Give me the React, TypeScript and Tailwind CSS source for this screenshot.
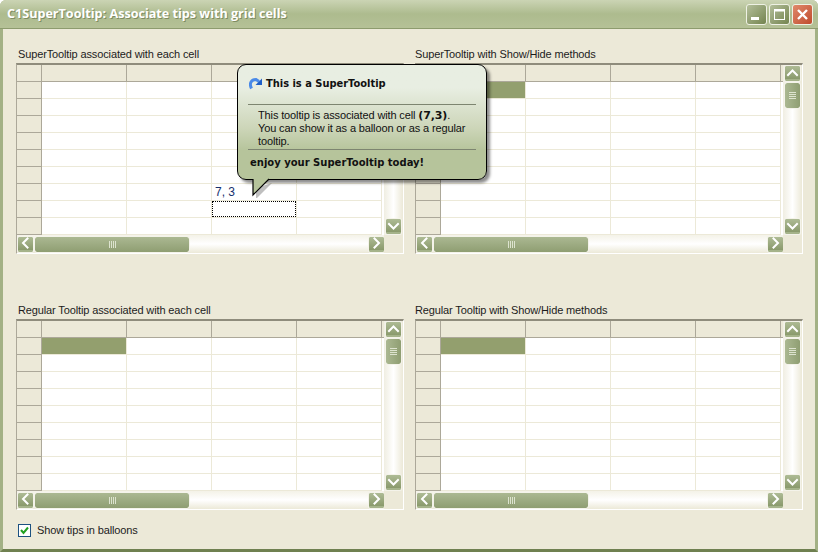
import React from "react";

const FONT = "font-['Liberation_Sans',sans-serif]";

function Chevron({ dir }: { dir: "up" | "down" | "left" | "right" }) {
  const d = {
    up: "M3 9 L7.5 4.5 L12 9",
    down: "M3 5 L7.5 9.5 L12 5",
    left: "M9.5 2.5 L5 7 L9.5 11.5",
    right: "M5.5 2.5 L10 7 L5.5 11.5",
  }[dir];
  return (
    <svg width="15" height="14" viewBox="0 0 15 14" fill="none">
      <path d={d} stroke="#fff" strokeWidth="2" strokeLinecap="square" />
    </svg>
  );
}

function ScrollBtn({ dir }: { dir: "up" | "down" | "left" | "right" }) {
  return (
    <div className="flex h-[15px] w-[15px] shrink-0 items-center justify-center rounded-[1px] border-b-2 border-b-[#a5b38a] bg-gradient-to-b from-[#aebb95] to-[#8a9a6c] outline outline-1 outline-[#f4f3ea]">
      <Chevron dir={dir} />
    </div>
  );
}

function Grip({ vertical }: { vertical?: boolean }) {
  return (
    <div className={`flex gap-px ${vertical ? "flex-col" : "flex-row"}`}>
      {[0, 1, 2, 3].map((i) => (
        <div key={i} className={`bg-[#dde3cf] ${vertical ? "h-px w-[7px]" : "h-[7px] w-px"}`} />
      ))}
    </div>
  );
}

function VScroll() {
  return (
    <div className="flex w-[19px] shrink-0 flex-col items-center bg-gradient-to-r from-[#f0eee2] via-white to-[#ece9d8] pt-px pb-px pr-px">
      <ScrollBtn dir="up" />
      <div className="mt-[2px] flex h-[25px] w-[15px] items-center justify-center rounded-[2px] bg-gradient-to-r from-[#abb892] to-[#8f9e72] outline outline-1 outline-[#f4f3ea]">
        <Grip vertical />
      </div>
      <div className="flex-1" />
      <ScrollBtn dir="down" />
    </div>
  );
}

function HScroll() {
  return (
    <div className="flex h-[18px] items-center">
      <div className="flex h-[18px] w-[367px] items-center bg-gradient-to-b from-[#f4f2e8] via-white to-[#ece9d8] pl-px">
        <ScrollBtn dir="left" />
        <div className="ml-[2px] flex h-[15px] w-[154px] items-center justify-center rounded-[2px] bg-gradient-to-b from-[#abb892] to-[#8f9e72] outline outline-1 outline-[#f4f3ea]">
          <Grip />
        </div>
        <div className="flex-1" />
        <ScrollBtn dir="right" />
      </div>
      <div className="h-full flex-1 bg-[#ece9d8]" />
    </div>
  );
}

function DataGrid({ selected, focus }: { selected?: boolean; focus?: boolean }) {
  const rows = [0, 1, 2, 3, 4, 5, 6, 7, 8];
  const cols = [0, 1, 2, 3];
  return (
    <div className="h-[191px] w-[388px] border-t-2 border-l border-b border-r border-t-[#8f8c7c] border-l-[#aca899] border-r-white border-b-white bg-[#ece9d8]">
      <div className="flex h-[170px]">
        <div className="w-[367px] overflow-hidden bg-white">
          <div className="flex h-[17px] border-b border-[#aca899] bg-[#ece9d8]">
            <div className="w-[25px] shrink-0 border-r border-[#aca899]" />
            {cols.map((c) => (
              <div key={c} className="w-[85px] shrink-0 border-r border-[#aca899]" />
            ))}
          </div>
          {rows.map((r) => (
            <div key={r} className="flex h-[17px]">
              <div className="w-[25px] shrink-0 border-r border-b border-[#aca899] bg-[#ece9d8]" />
              {cols.map((c) => {
                const isSel = selected && r === 0 && c === 0;
                const isText = focus && r === 6 && c === 2;
                const isFocus = focus && r === 7 && c === 2;
                return (
                  <div
                    key={c}
                    className={`relative w-[85px] shrink-0 border-r border-b border-[#ece9d8] text-[12px] leading-[16px] text-[#16306e] ${
                      isSel ? "bg-[#939f6e]" : ""
                    }`}
                  >
                    {isText && <span className="pl-[3px]">7, 3</span>}
                    {isFocus && <div className="h-full w-full border border-dotted border-black" />}
                  </div>
                );
              })}
            </div>
          ))}
        </div>
        <VScroll />
      </div>
      <HScroll />
    </div>
  );
}

function Panel({ title, selected, focus, right }: { title: string; selected?: boolean; focus?: boolean; right?: boolean }) {
  return (
    <div className="flex flex-col">
      <div className={`h-[16px] pt-px text-[11px] leading-[13px] tracking-[-0.13px] text-[#1c1c1c] ${right ? "ml-0" : "ml-[2px]"}`}>{title}</div>
      <DataGrid selected={selected} focus={focus} />
    </div>
  );
}

function WinBtn({ kind }: { kind: "min" | "max" | "close" }) {
  const bg =
    kind === "close"
      ? "bg-gradient-to-br from-[#e0896b] to-[#bf4a2c]"
      : "bg-gradient-to-br from-[#b4bf9b] to-[#74844f]";
  return (
    <div className={`flex h-[21px] w-[21px] items-center justify-center rounded-[3px] border border-[#eef1e4] ${bg}`}>
      <svg width="19" height="19" viewBox="0 0 19 19" fill="none">
        {kind === "min" && <rect x="4" y="12" width="8" height="3" fill="#fff" />}
        {kind === "max" && (
          <>
            <rect x="4.5" y="4.5" width="10" height="10" stroke="#fff" />
            <rect x="4" y="4" width="11" height="2.5" fill="#fff" />
          </>
        )}
        {kind === "close" && <path d="M5 5 L14 14 M14 5 L5 14" stroke="#fff" strokeWidth="2.4" />}
      </svg>
    </div>
  );
}

function Tooltip() {
  return (
    <div className="absolute left-[237px] top-[64px] h-[132px] w-[254px] text-[#111]">
      <svg className="absolute left-[11px] top-[112px]" width="24" height="22" viewBox="0 0 24 22">
        <path d="M8 12 L8 23 L24 7 Z" fill="#000" fillOpacity="0.25" />
        <path d="M5 0 L5 19 L21 3 L21 0 Z" fill="#b6c49b" />
        <path d="M5 3 L5 19 L21 3" fill="none" stroke="#000" strokeWidth="1.2" />
      </svg>
      <div className="h-[116px] w-[250px] rounded-[9px] border border-black bg-gradient-to-b from-[#e8eee2] from-20% via-[#cdd6b9] via-55% to-[#b6c49b] to-75% shadow-[3px_3px_3px_rgba(0,0,0,0.45)]">
        <svg className="absolute left-[12px] top-[13px]" width="14" height="13" viewBox="0 0 14 13" fill="none">
          <path d="M2.5 11.5 C0 6.5 2 2.5 7 2.5 L10 4.5" stroke="#4a8ae8" strokeWidth="3" />
          <path d="M13 1.5 L13 8 L6.5 8 Z" fill="#1f5fc8" />
        </svg>
        <div className="pl-[28px] pt-[12px] font-['DejaVu_Sans',sans-serif] text-[9.9px] font-bold leading-[14px]">This is a SuperTooltip</div>
        <div className="mx-[10px] mt-[13px] h-px bg-[#7d8570]" />
        <div className="pl-[20px] pt-[4px] text-[11px] leading-[13px] tracking-[-0.13px]">
          This tooltip is associated with cell <b className="font-['DejaVu_Sans',sans-serif] text-[11px] leading-[13px]">(7,3)</b>.
          <br />
          You can show it as a balloon or as a regular
          <br />
          tooltip.
        </div>
        <div className="mx-[10px] mt-px h-px bg-[#7d8570]" />
        <div className="pl-[12px] pt-[6px] font-['DejaVu_Sans',sans-serif] text-[10px] font-bold leading-[14px]">enjoy your SuperTooltip today!</div>
      </div>
    </div>
  );
}

export default function App() {
  return (
    <div className={`relative flex h-[552px] w-[818px] flex-col overflow-hidden rounded-t-[6px] bg-[#a9b78a] ${FONT}`}>
      <div className="flex h-[29px] shrink-0 items-center border-b border-[#8d9b6e] bg-gradient-to-b from-[#cbd4b4] via-[#adbb8e] to-[#b5c197] pl-[7px] pr-[5px]">
        <div className="flex-1 font-['Open_Sans',sans-serif] text-[12.6px] font-bold text-white [text-shadow:1px_1px_0_#7f8c62]">
          C1SuperTooltip: Associate tips with grid cells
        </div>
        <div className="flex gap-[2px]">
          <WinBtn kind="min" />
          <WinBtn kind="max" />
          <WinBtn kind="close" />
        </div>
      </div>
      <div className="flex min-h-0 flex-1 flex-col border-x-[3px] border-b-[3px] border-x-[#a3b185] border-b-[#6f8050] bg-[#ece9d8] pl-[13px] pt-[18px]">
        <div className="flex gap-[11px]">
          <Panel title="SuperTooltip associated with each cell" focus />
          <Panel title="SuperTooltip with Show/Hide methods" selected right />
        </div>
        <div className="mt-[49px] flex gap-[11px]">
          <Panel title="Regular Tooltip associated with each cell" selected />
          <Panel title="Regular Tooltip with Show/Hide methods" selected right />
        </div>
        <div className="ml-[2px] mt-[13px] flex items-center gap-[6px]">
          <div className="flex h-[13px] w-[13px] items-center justify-center border border-[#1c5180] bg-white">
            <svg width="11" height="11" viewBox="0 0 11 11" fill="none">
              <path d="M2 5 L4.5 8 L9 2.5" stroke="#21a121" strokeWidth="2" />
            </svg>
          </div>
          <span className="text-[11px] leading-[14px] tracking-[-0.13px] text-[#1c1c1c]">Show tips in balloons</span>
        </div>
      </div>
      <Tooltip />
    </div>
  );
}
